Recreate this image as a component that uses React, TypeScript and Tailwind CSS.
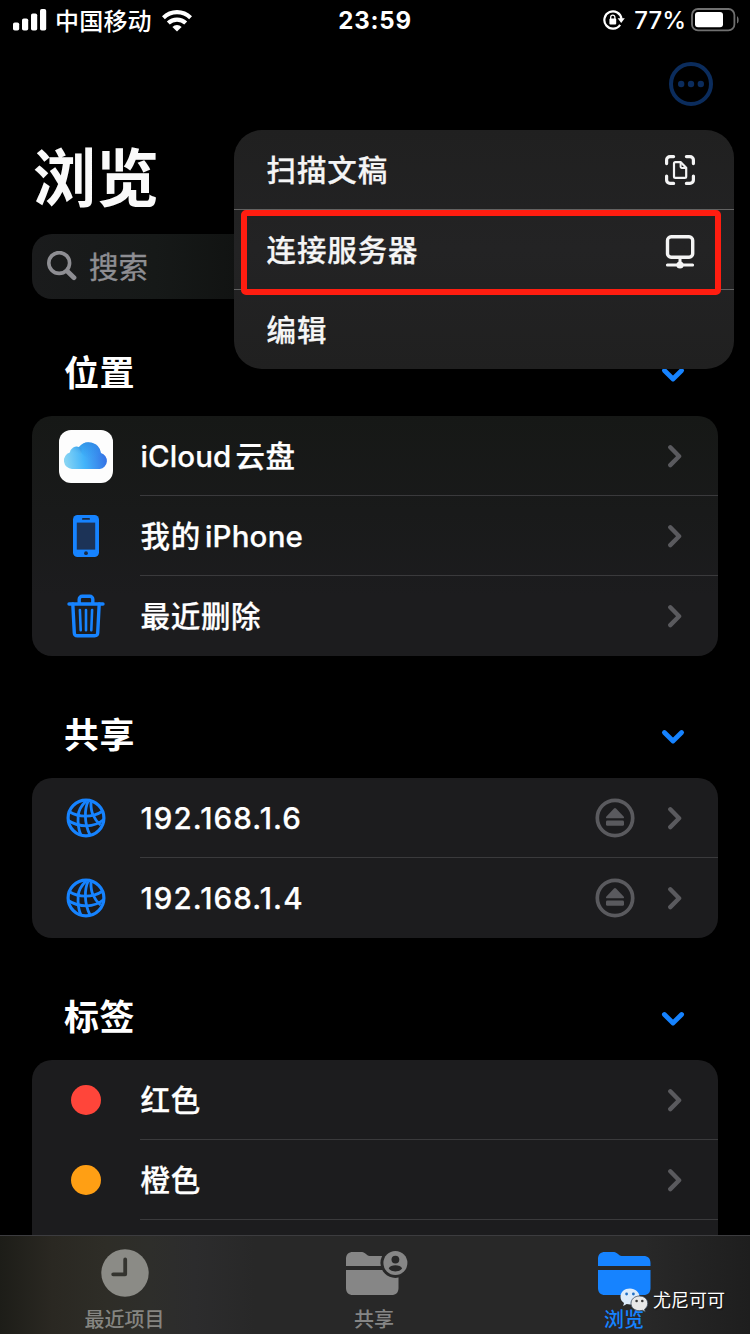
import React from 'react';

const FONT = "font-[Inter,'Noto_Sans_CJK_SC',sans-serif]";

const SignalIcon = () => (
  <svg width="34" height="22" viewBox="0 0 34 22" fill="#fff">
    <rect x="0" y="13.5" width="6.2" height="8" rx="1.8" />
    <rect x="9" y="9.5" width="6.2" height="12" rx="1.8" />
    <rect x="18" y="4.5" width="6.2" height="17" rx="1.8" />
    <rect x="27" y="0" width="6.2" height="21.5" rx="1.8" />
  </svg>
);

const WifiIcon = () => (
  <svg width="30" height="22" viewBox="0 0 30 22" fill="none" stroke="#fff" strokeWidth="4.2">
    <path d="M1.4 7.7a19.6 19.6 0 0 1 27.2 0" />
    <path d="M6.3 13.1a12.6 12.6 0 0 1 17.4 0" />
    <path d="M15 21.5l-4.6-4.6a6.6 6.6 0 0 1 9.2 0z" fill="#fff" stroke="none" />
  </svg>
);

const RotationLockIcon = () => (
  <svg width="22" height="20" viewBox="0 0 22 20" fill="none" stroke="#fff">
    <path d="M17.1 14.8A8.6 8.6 0 1 1 18.5 9" strokeWidth="2.2" />
    <path d="M14.6 8.2h7.2l-3.6 4.8z" fill="#fff" stroke="none" />
    <rect x="6.4" y="8.6" width="6.8" height="5.8" rx="1" fill="#fff" stroke="none" />
    <path d="M7.7 9V7.3a2.1 2.1 0 0 1 4.2 0V9" strokeWidth="1.3" />
  </svg>
);

const BatteryIcon = () => (
  <svg width="49" height="24" viewBox="0 0 49 24">
    <rect x="1" y="1" width="42.4" height="21.4" rx="6" fill="none" stroke="#707070" strokeWidth="1.8" />
    <rect x="4" y="4" width="28" height="15.2" rx="3" fill="#fff" />
    <path d="M46 8.2c2.2.9 2.2 6.5 0 7.4z" fill="#707070" />
  </svg>
);

const MoreIcon = () => (
  <svg width="44" height="44" viewBox="0 0 44 44" fill="#0b2c5c">
    <circle cx="22" cy="22" r="20" fill="none" stroke="#0b2c5c" strokeWidth="4" />
    <circle cx="12.2" cy="22" r="3.2" />
    <circle cx="22" cy="22" r="3.2" />
    <circle cx="31.8" cy="22" r="3.2" />
  </svg>
);

const SearchIcon = () => (
  <svg width="30" height="30" viewBox="0 0 30 30" fill="none" stroke="#8e8e93" strokeLinecap="round">
    <circle cx="12.2" cy="12" r="10.4" strokeWidth="3.6" />
    <path d="M20.6 20.5l6.4 6.2" strokeWidth="4.8" />
  </svg>
);

const ChevronDownIcon = () => (
  <svg width="24" height="16" viewBox="0 0 24 16" fill="none" stroke="#1683ff" strokeWidth="4.8" strokeLinecap="round" strokeLinejoin="round">
    <path d="M3.4 3.5L12 12l8.6-8.5" />
  </svg>
);

const ChevronRightIcon = () => (
  <svg width="16" height="24" viewBox="0 0 16 24" fill="none" stroke="#5a5a5e" strokeWidth="4.4" strokeLinecap="round" strokeLinejoin="round">
    <path d="M3.3 3.3l8.8 8.9-8.800 8.9" />
  </svg>
);

const ScanIcon = () => (
  <svg width="30" height="30" viewBox="0 0 30 30" fill="none" stroke="#f4f4f4" strokeWidth="3.2" strokeLinecap="round" strokeLinejoin="round">
    <path d="M1.6 8.6V5a3.4 3.4 0 0 1 3.4-3.4h3.6M21.4 1.6H25A3.4 3.4 0 0 1 28.4 5v3.6M28.4 21v4a3.4 3.4 0 0 1-3.4 3.4h-3.6M8.6 28.4H5A3.4 3.4 0 0 1 1.6 25v-4" />
    <path d="M10.4 7.2h5.4l5.4 5.6v8.6a1.4 1.4 0 0 1-1.4 1.4h-9.4A1.4 1.4 0 0 1 9 21.4V8.6a1.4 1.4 0 0 1 1.4-1.4z" strokeWidth="2.2" />
    <path d="M15.6 7.6v4.2a1.2 1.2 0 0 0 1.2 1.2H21" strokeWidth="2" />
  </svg>
);

const ServerIcon = () => (
  <svg width="30" height="37" viewBox="0 -3 30 37" fill="none" stroke="#f4f4f4" strokeWidth="3.4" strokeLinecap="round">
    <rect x="2.5" y="1.8" width="25.2" height="20.4" rx="3.6" />
    <path d="M15 23v7M2.4 30h25.2" strokeWidth="3" />
    <circle cx="15" cy="30" r="3.6" fill="#f4f4f4" stroke="none" />
  </svg>
);

const ICloudIcon = () => (
  <svg width="54" height="54" viewBox="0 0 54 54">
    <defs>
      <linearGradient id="cloud" x1="0" y1="0.6" x2="1" y2="0.5">
        <stop offset="0" stopColor="#8bd6f3" />
        <stop offset="0.45" stopColor="#43b4fa" />
        <stop offset="1" stopColor="#346fe4" />
      </linearGradient>
      <linearGradient id="dome" x1="0.3" y1="0" x2="0.5" y2="1">
        <stop offset="0" stopColor="#2b86dc" stopOpacity="0.6" />
        <stop offset="1" stopColor="#2b9cf5" stopOpacity="0" />
      </linearGradient>
      <linearGradient id="puff" x1="0.2" y1="1" x2="1" y2="0.2">
        <stop offset="0" stopColor="#7fd0f5" stopOpacity="0" />
        <stop offset="1" stopColor="#2f8fe0" stopOpacity="0.6" />
      </linearGradient>
    </defs>
    <rect y="1" width="54" height="53" rx="12" fill="#fdfdfd" />
    <path d="M13 40a8.4 8.4 0 0 1-2.2-16.4 7 7 0 0 1 9.2-5.6A12.4 12.4 0 0 1 42 24a8.2 8.2 0 0 1-1.2 16z" fill="url(#cloud)" />
    <path d="M20 18A12.4 12.4 0 0 1 42 24c-1 9-19 9-22-6z" fill="url(#dome)" />
    <path d="M10.8 23.6a7 7 0 0 1 11.7-4 8 8 0 0 1-1 6.2c-3-2.6-7-3-10.7-2.2z" fill="url(#puff)" />
  </svg>
);

const PhoneIcon = () => (
  <svg width="28" height="42" viewBox="0 0 28 42">
    <rect x="1" y="0" width="26" height="42" rx="4.6" fill="#1683ff" />
    <rect x="4.8" y="7.6" width="18.4" height="27" fill="#1c3357" />
    <rect x="10" y="3" width="8" height="1.8" rx="0.9" fill="#1b2a42" />
    <circle cx="14" cy="38.2" r="1.9" fill="#1b2a42" />
  </svg>
);

const TrashIcon = () => (
  <svg width="38" height="44" viewBox="0 0 38 44" fill="none" stroke="#1683ff" strokeWidth="3.4" strokeLinecap="round" strokeLinejoin="round">
    <path d="M2 10h34M12.2 9V5.2a3 3 0 0 1 3-3h7.6a3 3 0 0 1 3 3V9" />
    <path d="M5.8 10l1.500 29a3 3 0 0 0 3 2.800h17.400a3 3 0 0 0 3-2.800l1.500-29" />
    <path d="M12.9 16l.8 20.2M19 16v20.2M25.1 16l-.8 20.2" strokeWidth="2.6" />
  </svg>
);

const GlobeIcon = () => (
  <svg width="40" height="40" viewBox="0 0 40 40" fill="none" stroke="#1683ff" strokeWidth="2.8">
    <circle cx="20" cy="20" r="17.9" strokeWidth="3.2" />
    <path d="M20 3C15 8 12.5 13 12.2 17.5c-.5 7-.2 13 2.5 19" />
    <path d="M22 3.5C19.5 9 19.300 13 19.400 18c.1 8 1.600 13 4.400 18.500" />
    <path d="M25 3.5c-.2 6 .2 10 2.2 13.8 1.5 3.5 3.8 6.7 7.3 9.700" />
    <path d="M3 13.5c5.5 3.4 10.5 4.7 16.4 4.7 6.6 0 11.6-1.3 17.4-5.2" />
    <path d="M2.2 22.5c6 4 12 5.3 18.6 5.3 6.5 0 11.5-1.8 17-6.3" />
  </svg>
);

const EjectIcon = () => (
  <svg width="40" height="40" viewBox="0 0 40 40" fill="#5a5a5e">
    <circle cx="20" cy="20" r="17.7" fill="none" stroke="#5a5a5e" strokeWidth="3.7" />
    <path d="M19 10.4a1.4 1.4 0 0 1 2 0l7.6 8c.9 1 .4 1.9-.7 1.9H12.1c-1.1 0-1.6-.9-.7-1.9z" />
    <rect x="11" y="22.6" width="18" height="5.2" rx="1.4" />
  </svg>
);

const ClockIcon = () => (
  <svg width="48" height="48" viewBox="0 0 48 48">
    <circle cx="24" cy="24" r="23.7" fill="#8b8b86" />
    <path d="M24.2 10.5v14.8H12.2" fill="none" stroke="#34342f" strokeWidth="3.8" strokeLinecap="round" strokeLinejoin="round" />
  </svg>
);

const FolderShape = () => (
  <>
    <path d="M0 14V7c0-4.5 2.5-7 7-7h7.5c2.5 0 4 .6 5.8 2.2 1.6 1.5 2.7 1.9 4.7 1.9h20.5c4.5 0 7 2.5 7 7V14z" />
    <path d="M0 18h52.5v18c0 4.5-2.5 7-7 7H7c-4.5 0-7-2.5-7-7z" />
  </>
);

const FolderIcon = () => (
  <svg width="53" height="43" viewBox="0 0 53 43" fill="#1683ff">
    <FolderShape />
  </svg>
);

const SharedFolderIcon = () => (
  <svg width="62" height="45" viewBox="0 -2 62 45" fill="#868686">
    <FolderShape />
    <circle cx="49.4" cy="11" r="15" fill="#282828" />
    <circle cx="49.4" cy="11" r="12" />
    <circle cx="49.4" cy="7.6" r="3.9" fill="#282828" />
    <path d="M42.7 16.4c1.5-4.1 11.900-4.1 13.400 0-2.7 4-10.7 4-13.4 0z" fill="#282828" />
  </svg>
);

const WeChatIcon = () => (
  <svg width="29" height="25" viewBox="0 0 29 25">
    <path d="M10 .5C4.5.5.5 4 .5 8.7c0 2.7 1.4 4.9 3.5 6.3l-.8 3 3.5-1.9c1 .3 2.2.5 3.5.5 5.3 0 9.3-3.5 9.3-7.9S15.3.5 10 .5z" fill="#dcebfa" />
    <circle cx="6.6" cy="6" r="1.4" fill="#1f6fc4" />
    <circle cx="13.4" cy="6" r="1.4" fill="#1f6fc4" />
    <path d="M19.5 8c-4.7 0-8.5 3.1-8.5 7.4s3.8 7.3 8.5 7.3c1 0 2-.1 2.9-.4l2.8 1.5-.7-2.5c2-1.4 3.2-3.5 3.2-5.9 0-4.3-3.6-7.4-8.2-7.4z" fill="#e8e8e8" stroke="#3b4a5c" strokeWidth="0.8" />
    <circle cx="16.6" cy="13" r="1.3" fill="#3c3c3c" />
    <circle cx="22.3" cy="13" r="1.3" fill="#3c3c3c" />
  </svg>
);

const Dot = ({ className }: { className: string }) => (
  <div className={`size-[30px] rounded-full ${className}`} />
);

interface RowItem {
  label: React.ReactNode;
  icon: React.ReactNode;
  eject?: boolean;
}

interface Section {
  title: string;
  tint: string;
  items: RowItem[];
}

const sections: Section[] = [
  {
    title: '位置',
    tint: 'bg-[linear-gradient(180deg,#161816_0%,#191a1a_40%,#1c1c1e_75%)]',
    items: [
      {
        label: <><span className="tracking-[0.1px]">iCloud</span><span className="ml-[4px]">云盘</span></>,
        icon: <ICloudIcon />,
      },
      {
        label: <>我的<span className="ml-[4px] tracking-[0.2px]">iPhone</span></>,
        icon: <PhoneIcon />,
      },
      { label: '最近删除', icon: <TrashIcon /> },
    ],
  },
  {
    title: '共享',
    tint: 'bg-[#1c1c1e]',
    items: [
      { label: <span className="tracking-[1.1px]">192.168.1.6</span>, icon: <GlobeIcon />, eject: true },
      { label: <span className="tracking-[1.1px]">192.168.1.4</span>, icon: <GlobeIcon />, eject: true },
    ],
  },
  {
    title: '标签',
    tint: 'bg-[#1c1c1e]',
    items: [
      { label: '红色', icon: <Dot className="bg-[#ff453a]" /> },
      { label: '橙色', icon: <Dot className="bg-[#ff9f14]" /> },
      { label: null, icon: null },
    ],
  },
];

const menuItems = [
  { label: '扫描文稿', icon: <ScanIcon /> },
  { label: '连接服务器', icon: <ServerIcon /> },
  { label: '编辑', icon: null },
];

const StatusBar = () => (
  <header className="grid h-10 grid-cols-3 items-center text-white">
    <div className="flex items-center pl-[13px]">
      <SignalIcon />
      <span className="ml-[8px] pt-[3px] text-[24px] leading-none font-medium tracking-[0.2px]">中国移动</span>
      <span className="ml-[10px] pt-px"><WifiIcon /></span>
    </div>
    <span className="pt-[2px] text-center text-[24px] leading-none font-bold tracking-[0.8px]">23:59</span>
    <div className="flex items-center justify-end pr-[10px]">
      <RotationLockIcon />
      <span className="mr-[5px] ml-[9px] pt-[2px] text-[24px] leading-none font-medium">77%</span>
      <BatteryIcon />
    </div>
  </header>
);

const ListRow = ({ item, last }: { item: RowItem; last: boolean }) => (
  <div className="flex h-20 pl-[26px]">
    <div className="flex w-[55px] items-center justify-center">{item.icon}</div>
    <div className={`ml-[27px] flex flex-1 items-center border-b pr-[35px] ${last ? 'border-transparent' : 'border-[#3a3a3c]'}`}>
      <span className="flex-1 pt-px pl-[0.5px] text-[29.5px] font-medium tracking-[0.7px] text-white [-webkit-text-stroke:0.25px_currentColor]">
        {item.label}
      </span>
      {item.eject && <span className="mr-8 pt-px"><EjectIcon /></span>}
      <ChevronRightIcon />
    </div>
  </div>
);

const ContextMenu = () => (
  <div className="absolute top-[130px] left-[234px] h-[239px] w-[500px] rounded-[28px] bg-[linear-gradient(180deg,#202020,#232324_50%,#202020)]">
    {menuItems.map((item, i) => (
      <div
        key={item.label}
        className={`flex h-20 items-center justify-between border-b pr-[39px] pl-8 ${i < menuItems.length - 1 ? 'border-[#626262]' : 'border-transparent'}`}
      >
        <span className="pt-px pl-[0.5px] text-[29.5px] font-medium tracking-[0.9px] text-[#f5f5f5] [-webkit-text-stroke:0.25px_currentColor]">
          {item.label}
        </span>
        <span className="pt-px">{item.icon}</span>
      </div>
    ))}
    <div className="absolute top-[80px] left-[7px] h-[85px] w-[480px] rounded-[5px] border-[6px] border-[#ff1d10]" />
  </div>
);

const TabBar = () => (
  <nav className="grid h-[99px] shrink-0 grid-cols-3 border-t border-[#3c3c3f] bg-[linear-gradient(90deg,#1d1d18_0%,#2a2822_7%,#2e2d27_14%,#2e2e2b_20%,#2c2c2d_26%,#282828_34%,#282828_86%,#1e1e1e_100%)] text-[20px] font-medium">
    <div className="flex flex-col items-center pt-[13px] pr-px">
      <ClockIcon />
      <span className="mt-[9px] leading-[28px] text-[#858581]">最近项目</span>
    </div>
    <div className="flex flex-col items-center pt-[14px] pr-[2px]">
      <span className="ml-[5px]"><SharedFolderIcon /></span>
      <span className="mt-[11px] leading-[28px] text-[#858585]">共享</span>
    </div>
    <div className="flex flex-col items-center pt-4 pr-[2px]">
      <FolderIcon />
      <span className="mt-[11px] leading-[28px] text-[#1683ff]">浏览</span>
    </div>
  </nav>
);

export default function App() {
  return (
    <div className={`relative flex h-[1334px] w-[750px] flex-col overflow-hidden bg-black [&_svg]:block ${FONT}`}>
      <StatusBar />

      <main className="min-h-0 flex-1 overflow-hidden px-8">
        <div className="flex h-[88px] items-center justify-end pr-[5px]">
          <MoreIcon />
        </div>
        <h1 className="h-[106px] pl-px text-[63px] leading-[100px] font-bold text-[#fafafa]">浏览</h1>

        <div className="flex h-[65px] items-center gap-[12px] rounded-[20px] bg-[linear-gradient(90deg,#1a1b1c_0%,#161918_18%,#111312_30%)] pl-[15px] text-[29.5px] text-[#8e8e93]">
          <span className="pb-[2px]"><SearchIcon /></span>
          <span className="pt-px [-webkit-text-stroke:0.4px_currentColor]">搜索</span>
        </div>

        {sections.map((section, i) => (
          <section key={section.title}>
            <div className={`flex items-end justify-between pr-[33px] pl-8 ${i === 0 ? 'h-[117px]' : 'h-[122px]'}`}>
              <h2 className="pb-[18px] text-[35px] leading-[50px] font-bold tracking-[0.5px] text-white">{section.title}</h2>
              <span className="pb-[33px]"><ChevronDownIcon /></span>
            </div>
            <div className={`rounded-[20px] ${section.tint}`}>
              {section.items.map((item, j) => (
                <ListRow key={j} item={item} last={j === section.items.length - 1} />
              ))}
            </div>
          </section>
        ))}
      </main>

      <TabBar />
      <ContextMenu />

      <div className="absolute top-[1288px] left-[620px] flex items-center gap-1">
        <WeChatIcon />
        <span className="text-[18px] leading-[25px] text-white [text-shadow:1px_1px_1px_#111]">尤尼可可</span>
      </div>
    </div>
  );
}
